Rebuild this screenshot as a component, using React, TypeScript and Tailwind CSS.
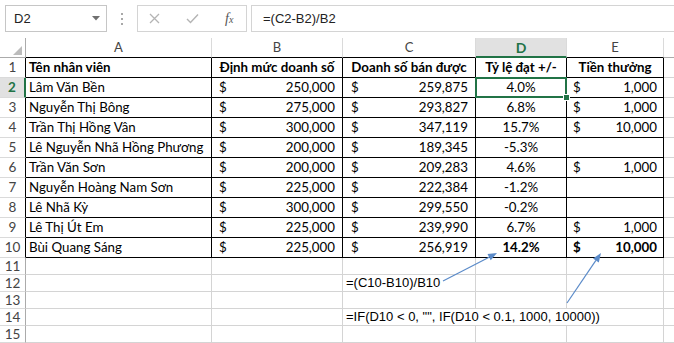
import React from "react";

type Row = { name: string; b: string; c: string; d: string; e: string };

const data: Row[] = [
  { name: "Lâm Văn Bền", b: "250,000", c: "259,875", d: "4.0%", e: "1,000" },
  { name: "Nguyễn Thị Bông", b: "275,000", c: "293,827", d: "6.8%", e: "1,000" },
  { name: "Trần Thị Hồng Vân", b: "300,000", c: "347,119", d: "15.7%", e: "10,000" },
  { name: "Lê Nguyễn Nhã Hồng Phương", b: "200,000", c: "189,345", d: "-5.3%", e: "" },
  { name: "Trần Văn Sơn", b: "200,000", c: "209,283", d: "4.6%", e: "1,000" },
  { name: "Nguyễn Hoàng Nam Sơn", b: "225,000", c: "222,384", d: "-1.2%", e: "" },
  { name: "Lê Nhã Kỳ", b: "300,000", c: "299,550", d: "-0.2%", e: "" },
  { name: "Lê Thị Út Em", b: "225,000", c: "239,990", d: "6.7%", e: "1,000" },
  { name: "Bùi Quang Sáng", b: "225,000", c: "256,919", d: "14.2%", e: "10,000" },
];

function Toolbar() {
  return (
    <div className="h-[38px] flex items-start pt-[5px] pl-[5px] font-['Liberation_Sans',Arial,sans-serif]">
      <div className="w-[102px] h-[27px] border border-[#c6c6c6] flex items-center justify-between pl-[8px] pr-[6px] text-[13px] text-[#222]">
        <span>D2</span>
        <svg width="8" height="5" viewBox="0 0 8 5">
          <polygon points="0,0 8,0 4,4.5" fill="#707070" />
        </svg>
      </div>
      <div className="w-[30px] h-[27px] flex flex-col items-center justify-center gap-[3px]">
        <div className="w-[2px] h-[2px] bg-[#a8a8a8]" />
        <div className="w-[2px] h-[2px] bg-[#a8a8a8]" />
        <div className="w-[2px] h-[2px] bg-[#a8a8a8]" />
      </div>
      <div className="w-[110px] h-[27px] border border-[#d4d4d4] flex items-center pl-[10px]">
        <svg width="11" height="11" viewBox="0 0 11 11" className="ml-[1px]">
          <path d="M1 1 L10 10 M10 1 L1 10" stroke="#b4b4b4" strokeWidth="1.3" fill="none" />
        </svg>
        <svg width="13" height="11" viewBox="0 0 13 11" className="ml-[26px]">
          <path d="M1 6 L4.5 9.5 L12 1.5" stroke="#b4b4b4" strokeWidth="1.4" fill="none" />
        </svg>
        <span className="ml-[26px] text-[14px] italic text-[#555] font-['Liberation_Serif',serif] leading-none">
          f<span className="text-[10px]">x</span>
        </span>
      </div>
      <div className="ml-[4px] flex-1 h-[27px] border border-r-0 border-[#d4d4d4] flex items-center pl-[11px] text-[13px] text-[#222]">
        =(C2-B2)/B2
      </div>
    </div>
  );
}

const colHeaderBase = "h-[20px] flex items-center justify-center text-[13px] text-[#444] border-r border-b border-r-[#dadada] border-b-black";

function App() {
  const cells: React.ReactNode[] = [];

  // header row
  cells.push(
    <div key="corner" className="relative h-[20px] border-r border-b border-r-[#ababab] border-b-[#ababab]">
      <svg className="absolute right-[3px] bottom-[2px]" width="9" height="9" viewBox="0 0 9 9">
        <polygon points="9,0 9,9 0,9" fill="#bcbcbc" />
      </svg>
    </div>
  );
  cells.push(<div key="hA" className={colHeaderBase}>A</div>);
  cells.push(<div key="hB" className={colHeaderBase}>B</div>);
  cells.push(<div key="hC" className={colHeaderBase}>C</div>);
  cells.push(
    <div key="hD" className="h-[20px] flex items-center justify-center text-[14px] font-bold text-[#217346] bg-[#e1e1e1] border-r border-b-2 border-r-[#dadada] border-b-[#217346]">
      D
    </div>
  );
  cells.push(<div key="hE" className={colHeaderBase}>E</div>);
  cells.push(<div key="hF" className="h-[20px] border-b border-b-[#ababab]" />);

  // row 1 (table header)
  cells.push(
    <div key="r1" className="h-[20px] flex items-center justify-center text-[13.5px] text-[#444] border-r border-b border-r-black border-b-[#dadada]">1</div>
  );
  cells.push(<div key="r1a" className="h-[20px] flex items-center pl-[3px] pt-[1px] text-[13.3px] font-bold border-r border-b border-black whitespace-nowrap overflow-hidden">Tên nhân viên</div>);
  cells.push(<div key="r1b" className="h-[20px] flex items-center justify-center pt-[1px] text-[13.3px] font-bold border-r border-b border-black whitespace-nowrap overflow-hidden">Định mức doanh số</div>);
  cells.push(<div key="r1c" className="h-[20px] flex items-center justify-center pt-[1px] text-[13.3px] font-bold border-r border-b border-black whitespace-nowrap overflow-hidden">Doanh số bán được</div>);
  cells.push(<div key="r1d" className="h-[20px] flex items-center justify-center pt-[1px] text-[13.3px] font-bold border-r border-b border-black whitespace-nowrap overflow-hidden">Tỷ lệ đạt +/-</div>);
  cells.push(<div key="r1e" className="h-[20px] flex items-center justify-center pt-[1px] text-[13.3px] font-bold border-r border-b border-black whitespace-nowrap overflow-hidden">Tiền thưởng</div>);
  cells.push(<div key="r1f" className="h-[20px] border-b border-b-[#d4d4d4]" />);

  data.forEach((r, i) => {
    const n = i + 2;
    const selected = n === 2;
    const bold = n === 10;
    cells.push(
      <div
        key={`rh${n}`}
        className={
          selected
            ? "h-[20px] flex items-center justify-center text-[13.5px] font-bold text-[#217346] bg-[#e1e1e1] border-r-2 border-b border-r-[#217346] border-b-[#dadada]"
            : "h-[20px] flex items-center justify-center text-[13.5px] text-[#444] border-r border-b border-r-black border-b-[#dadada]"
        }
      >
        {n}
      </div>
    );
    cells.push(
      <div key={`a${n}`} className="h-[20px] flex items-center pl-[3px] pt-[1px] text-[13.3px] border-r border-b border-black whitespace-nowrap overflow-hidden">
        {r.name}
      </div>
    );
    cells.push(
      <div key={`b${n}`} className="h-[20px] flex items-center justify-between pl-[7px] pr-[7px] pt-[1px] text-[13.3px] border-r border-b border-black">
        <span>$</span>
        <span>{r.b}</span>
      </div>
    );
    cells.push(
      <div key={`c${n}`} className="h-[20px] flex items-center justify-between pl-[8px] pr-[7px] pt-[1px] text-[13.3px] border-r border-b border-black">
        <span>$</span>
        <span>{r.c}</span>
      </div>
    );
    cells.push(
      <div
        key={`d${n}`}
        className={
          bold
            ? "relative h-[20px] flex items-center justify-center pt-[1px] text-[13.3px] font-bold border-r border-b border-black"
            : "relative h-[20px] flex items-center justify-center pt-[1px] text-[13.3px] border-r border-b border-black"
        }
      >
        {r.d}
        {selected && (
          <div className="absolute left-[-1px] top-[-1px] right-[-1px] bottom-[-1px] border-2 border-[#217346] z-10">
            <div className="absolute right-[-5px] bottom-[-5px] w-[7px] h-[7px] bg-[#217346] border border-white" />
          </div>
        )}
      </div>
    );
    cells.push(
      <div
        key={`e${n}`}
        className={
          bold
            ? "h-[20px] flex items-center justify-between pl-[6px] pr-[6px] pt-[1px] text-[13.3px] font-bold border-r border-b border-black"
            : "h-[20px] flex items-center justify-between pl-[6px] pr-[6px] pt-[1px] text-[13.3px] border-r border-b border-black"
        }
      >
        {r.e ? (
          <>
            <span>$</span>
            <span>{r.e}</span>
          </>
        ) : null}
      </div>
    );
    cells.push(<div key={`f${n}`} className="h-[20px] border-b border-b-[#d4d4d4]" />);
  });

  for (let n = 11; n <= 15; n++) {
    cells.push(
      <div key={`rh${n}`} className="h-[17px] flex items-center justify-center text-[13.5px] text-[#444] border-r border-b border-r-[#ababab] border-b-[#dadada]">
        {n}
      </div>
    );
    cells.push(<div key={`a${n}`} className="h-[17px] border-r border-b border-[#d4d4d4]" />);
    cells.push(<div key={`b${n}`} className="h-[17px] border-r border-b border-[#d4d4d4]" />);
    if (n === 12) {
      cells.push(
        <div key={`c${n}`} className="h-[17px] flex items-center pl-[3px] text-[13px] font-['Liberation_Sans',Arial,sans-serif] whitespace-nowrap border-r border-b border-[#d4d4d4]">
          =(C10-B10)/B10
        </div>
      );
    } else if (n === 14) {
      cells.push(
        <div key={`c${n}`} className="relative z-10 h-[17px] flex items-center pl-[3px] text-[13px] font-['Liberation_Sans',Arial,sans-serif] whitespace-nowrap border-b border-[#d4d4d4]">
          =IF(D10 &lt; 0, "", IF(D10 &lt; 0.1, 1000, 10000))
        </div>
      );
    } else {
      cells.push(<div key={`c${n}`} className="h-[17px] border-r border-b border-[#d4d4d4]" />);
    }
    if (n === 14) {
      cells.push(<div key={`d${n}`} className="h-[17px] border-b border-[#d4d4d4]" />);
    } else {
      cells.push(<div key={`d${n}`} className="h-[17px] border-r border-b border-[#d4d4d4]" />);
    }
    cells.push(<div key={`e${n}`} className="h-[17px] border-r border-b border-[#d4d4d4]" />);
    cells.push(<div key={`f${n}`} className="h-[17px] border-b border-[#d4d4d4]" />);
  }

  return (
    <div className="relative w-[674px] h-[343px] overflow-hidden bg-white text-black font-['Lato','Liberation_Sans',sans-serif]">
      <Toolbar />
      <div className="grid grid-cols-[26px_186px_131px_133px_91px_97px_1fr]">{cells}</div>
      <svg className="absolute left-0 top-0 pointer-events-none z-20" width="674" height="343" viewBox="0 0 674 343">
        <line x1="443" y1="281" x2="489.1" y2="257.2" stroke="#5b8bc9" strokeWidth="1.2" />
        <polygon points="497,253 490.7,260.3 487.5,254.1" fill="#5b8bc9" />
        <line x1="567" y1="303" x2="595.9" y2="260.4" stroke="#5b8bc9" strokeWidth="1.2" />
        <polygon points="601,253 598.8,262.4 593,258.4" fill="#5b8bc9" />
      </svg>
    </div>
  );
}

export default App;
